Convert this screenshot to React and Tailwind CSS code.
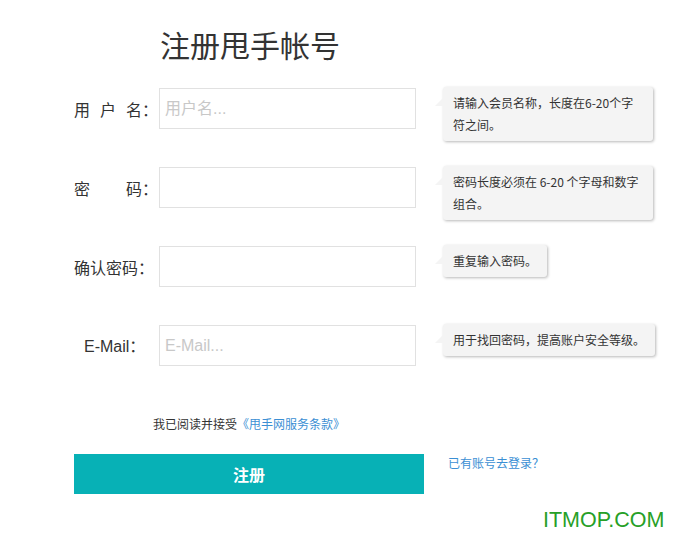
import React from 'react';

const cjkStack = { fontFamily: '"Noto Sans CJK SC", "Liberation Sans", sans-serif' };
const latinStack = { fontFamily: '"Liberation Sans", "Noto Sans CJK SC", sans-serif' };

const Tip = ({ children, className = '' }) => (
  <div
    className={`relative ml-[27px] -mt-[1px] bg-[#f4f4f4] rounded-[3px] px-[10px] py-[5px] text-[12px] leading-[22px] text-[#333] whitespace-nowrap shadow-[1px_1px_3px_rgba(0,0,0,0.28)] ${className}`}
  >
    {/* little arrow */}
    <span className="absolute left-[-8px] top-[11px] w-0 h-0 border-b-[8px] border-b-[#f4f4f4] border-l-[8px] border-l-transparent"></span>
    {children}
  </div>
);

const Row = ({ label, placeholder, type = 'text', tip }) => (
  <div className="flex items-start h-[41px]">
    <div className="w-[85px] h-[41px] flex items-center text-[16px] text-[#333]">{label}</div>
    <input
      type={type}
      placeholder={placeholder}
      className="w-[257px] h-[41px] border border-[#e1e1e1] px-[5px] text-[16px] text-[#333] placeholder:text-[#c8c8c8] outline-none"
      style={latinStack}
    />
    {tip}
  </div>
);

export default function App() {
  return (
    <div className="relative w-[673px] h-[547px] bg-white overflow-hidden" style={cjkStack}>
      <div className="pl-[74px] pt-[26px]">
        {/* Title */}
        <h1 className="pl-[86px] text-[30px] leading-[36px] font-normal text-[#333]">注册甩手帐号</h1>

        {/* Form rows */}
        <div className="mt-[26px] flex flex-col gap-[38px]">
          <Row
            label={
              <>
                <span className="mr-[10px]">用</span>
                <span className="mr-[10px]">户</span>
                <span>名：</span>
              </>
            }
            placeholder="用户名..."
            tip={
              <Tip className="w-[210px]">
                请输入会员名称，长度在6-20个字
                <br />
                符之间。
              </Tip>
            }
          />
          <Row
            label={
              <>
                <span className="mr-[36px]">密</span>
                <span>码：</span>
              </>
            }
            type="password"
            tip={
              <Tip className="w-[210px]">
                密码长度必须在 6-20 个字母和数字
                <br />
                组合。
              </Tip>
            }
          />
          <Row label={<span>确认密码：</span>} type="password" tip={<Tip>重复输入密码。</Tip>} />
          <Row
            label={
              <span className="pl-[10px]">
                <span style={latinStack}>E-Mail</span>：
              </span>
            }
            placeholder="E-Mail..."
            tip={<Tip>用于找回密码，提高账户安全等级。</Tip>}
          />
        </div>

        {/* Agreement */}
        <p className="mt-[49px] pl-[79px] text-[12px] leading-[18px] text-[#333]">
          我已阅读并接受<a href="#" className="text-[#3b8fd4]">《甩手网服务条款》</a>
        </p>

        {/* Submit */}
        <div className="mt-[21px] flex items-start">
          <button className="w-[350px] h-[40px] bg-[#07b1b6] text-white text-[16px] font-bold">注册</button>
          <a href="#" className="ml-[24px] text-[12px] leading-[18px] text-[#3b8fd4]">已有账号去登录？</a>
        </div>
      </div>

      {/* watermark */}
      <div className="absolute left-[543px] top-[510px] text-[21.5px] leading-none text-[#27a027]" style={latinStack}>
        ITMOP.COM
      </div>
    </div>
  );
}
